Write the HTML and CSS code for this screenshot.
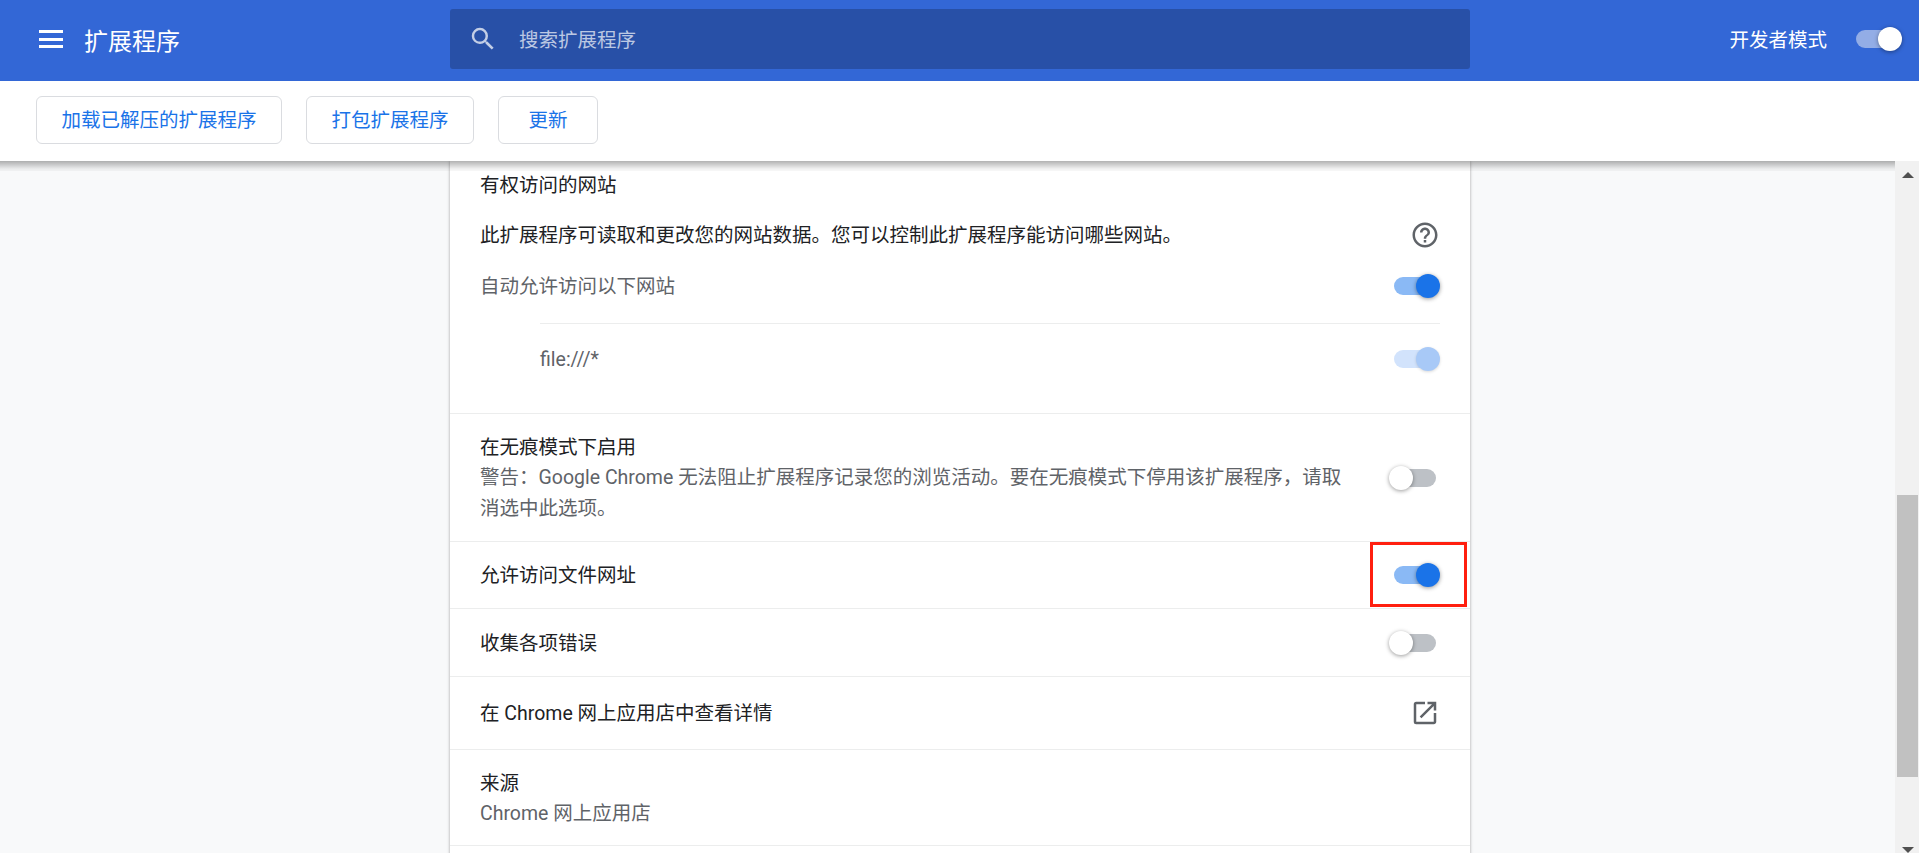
FILE: index.html
```html
<!DOCTYPE html>
<html lang="zh-CN">
<head>
    <meta charset="UTF-8">
    <meta name="viewport" content="width=device-width, initial-scale=1.0">
    <title>扩展程序</title>
    <link rel="stylesheet" href="styles.css">
</head>
<body>
    <header class="topbar">
        <div class="menu-icon"><span></span><span></span><span></span></div>
        <div class="page-title">扩展程序</div>
        <div class="search-box">
            <svg class="search-icon" viewBox="0 0 24 24"><path d="M15.5 14h-.79l-.28-.27A6.47 6.47 0 0 0 16 9.5 6.5 6.5 0 1 0 9.5 16c1.61 0 3.09-.59 4.23-1.57l.27.28v.79l5 4.99L20.49 19l-4.99-5zm-6 0C7.01 14 5 11.99 5 9.5S7.01 5 9.5 5 14 7.01 14 9.5 11.99 14 9.5 14z"/></svg>
            <span class="search-text">搜索扩展程序</span>
        </div>
        <div class="dev-mode">
            <span class="dev-label">开发者模式</span>
            <div class="toggle toggle-dev"><div class="knob"></div></div>
        </div>
    </header>

    <div class="toolbar">
        <button class="tool-btn">加载已解压的扩展程序</button>
        <button class="tool-btn">打包扩展程序</button>
        <button class="tool-btn">更新</button>
    </div>

    <main class="main">
        <div class="content">
            <div class="toolbar-shadow"></div>
            <div class="card">
                <section class="section section-access">
                    <div class="row-title">有权访问的网站</div>
                    <div class="row-desc">
                        <span>此扩展程序可读取和更改您的网站数据。您可以控制此扩展程序能访问哪些网站。</span>
                        <svg class="icon" viewBox="0 0 24 24"><path d="M11 18h2v-2h-2v2zm1-16C6.48 2 2 6.48 2 12s4.48 10 10 10 10-4.48 10-10S17.52 2 12 2zm0 18c-4.41 0-8-3.59-8-8s3.59-8 8-8 8 3.59 8 8-3.59 8-8 8zm0-14c-2.21 0-4 1.79-4 4h2c0-1.1.9-2 2-2s2 .9 2 2c0 2-3 1.75-3 5h2c0-2.25 3-2.5 3-5 0-2.21-1.79-4-4-4z"/></svg>
                    </div>
                    <div class="row-auto">
                        <span class="muted">自动允许访问以下网站</span>
                        <div class="toggle toggle-on"><div class="knob"></div></div>
                    </div>
                    <div class="site-row">
                        <span class="muted">file:///*</span>
                        <div class="toggle toggle-on toggle-disabled"><div class="knob"></div></div>
                    </div>
                </section>

                <section class="section section-incognito">
                    <div class="incognito-text">
                        <div class="line">在无痕模式下启用</div>
                        <div class="line muted">警告：Google Chrome 无法阻止扩展程序记录您的浏览活动。要在无痕模式下停用该扩展程序，请取消选中此选项。</div>
                    </div>
                    <div class="toggle toggle-off"><div class="knob"></div></div>
                </section>

                <section class="section row row-file">
                    <span>允许访问文件网址</span>
                    <div class="toggle toggle-on"><div class="knob"></div></div>
                    <div class="red-mark"></div>
                </section>

                <section class="section row row-errors">
                    <span>收集各项错误</span>
                    <div class="toggle toggle-off"><div class="knob"></div></div>
                </section>

                <section class="section row row-store">
                    <span>在 Chrome 网上应用店中查看详情</span>
                    <svg class="icon" viewBox="0 0 24 24"><path d="M19 19H5V5h7V3H5a2 2 0 0 0-2 2v14a2 2 0 0 0 2 2h14c1.1 0 2-.9 2-2v-7h-2v7zM14 3v2h3.59l-9.83 9.83 1.41 1.41L19 6.41V10h2V3h-7z"/></svg>
                </section>

                <section class="section section-source">
                    <div class="line">来源</div>
                    <div class="line muted source-name">Chrome 网上应用店</div>
                </section>
            </div>
        </div>

        <div class="scrollbar">
            <div class="arrow-up"></div>
            <div class="thumb"></div>
            <div class="arrow-down"></div>
        </div>
    </main>
</body>
</html>
```

FILE: styles.css
```css
:root {
    --header-blue: #3367d6;
    --link-blue: #1a73e8;
    --text: #202124;
    --muted: #5f6368;
    --line: #eceded;
}

* {
    margin: 0;
    padding: 0;
    box-sizing: border-box;
}

body {
    height: 100vh;
    display: flex;
    flex-direction: column;
    overflow: hidden;
    background: #f8f9fa;
    color: var(--text);
    font-family: Roboto, "Noto Sans CJK SC", sans-serif;
    font-size: 19.5px;
}

.topbar {
    height: 81px;
    flex-shrink: 0;
    display: flex;
    align-items: center;
    padding: 0 17px 3px 39px;
    background: var(--header-blue);
    color: #fff;
}

.menu-icon {
    width: 24px;
    height: 18px;
    margin-right: 21px;
    display: flex;
    flex-direction: column;
    justify-content: space-between;
}

.menu-icon span {
    height: 3px;
    background: #fff;
}

.page-title {
    width: 366px;
    font-size: 24px;
}

.search-box {
    width: 1020px;
    height: 60px;
    display: flex;
    align-items: center;
    padding-left: 18px;
    background: #2850a7;
    border-radius: 3px;
}

.search-icon {
    width: 30px;
    height: 30px;
    margin-right: 21px;
    fill: rgba(255, 255, 255, 0.72);
}

.search-text {
    padding-bottom: 2px;
    color: rgba(255, 255, 255, 0.7);
}

.dev-mode {
    margin-left: auto;
    display: flex;
    align-items: center;
    gap: 29px;
}

.dev-label {
    padding-bottom: 2px;
}

.toggle {
    position: relative;
    width: 45px;
    height: 18px;
    flex-shrink: 0;
    border-radius: 9px;
}

.knob {
    position: absolute;
    top: -3px;
    width: 24px;
    height: 24px;
    border-radius: 50%;
    box-shadow: 0 1px 4px rgba(0, 0, 0, 0.4);
}

.toggle-dev {
    margin-right: 1px;
    background: #93ade6;
}

.toggle-dev .knob {
    right: -1px;
    background: #fff;
}

.toggle-on {
    margin-right: 1px;
    background: #8ab9f5;
}

.toggle-on .knob {
    right: -1px;
    background: var(--link-blue);
}

.toggle-disabled {
    background: #d2e3fc;
}

.toggle-disabled .knob {
    background: #a8c9f7;
    box-shadow: 0 1px 3px rgba(0, 0, 0, 0.15);
}

.toggle-off {
    margin-right: 4px;
    background: #bdc1c6;
}

.toggle-off .knob {
    left: -2px;
    background: #fff;
}

.toolbar {
    height: 80px;
    flex-shrink: 0;
    display: flex;
    align-items: flex-start;
    gap: 24px;
    padding: 15px 0 0 36px;
    background: #fff;
}

.tool-btn {
    height: 48px;
    min-width: 100px;
    padding: 0 24.5px 3px;
    background: #fff;
    border: 1px solid #dadce0;
    border-radius: 6px;
    color: var(--link-blue);
    font-family: inherit;
    font-size: 19.5px;
}

.main {
    flex: 1;
    min-height: 0;
    display: flex;
}

.content {
    position: relative;
    flex: 1;
    overflow: hidden;
    padding-left: 450px;
}

.toolbar-shadow {
    position: absolute;
    top: 0;
    left: 0;
    right: 0;
    height: 10px;
    z-index: 2;
    background: linear-gradient(to bottom, rgba(0, 0, 0, 0.3), rgba(0, 0, 0, 0.05) 80%, rgba(0, 0, 0, 0.03));
}

.card {
    width: 1020px;
    min-height: 100%;
    padding-bottom: 40px;
    background: #fff;
    box-shadow: 0 0 3px rgba(0, 0, 0, 0.35);
}

.section {
    border-bottom: 1px solid var(--line);
    padding: 0 30px;
}

.muted {
    color: var(--muted);
}

.icon {
    width: 30px;
    height: 30px;
    flex-shrink: 0;
    fill: var(--muted);
}

.section-access {
    height: 253px;
}

.row-title {
    height: 48px;
    line-height: 50px;
}

.row-desc,
.row-auto,
.site-row,
.row {
    display: flex;
    align-items: center;
    justify-content: space-between;
}

.row-desc > span,
.row-auto > span,
.row > span {
    padding-bottom: 3px;
}

.row-desc {
    height: 52px;
}

.row-auto {
    height: 50px;
}

.site-row {
    height: 71px;
    margin: 12px 0 0 60px;
    border-top: 1px solid var(--line);
}

.section-incognito {
    height: 128px;
    display: flex;
    align-items: center;
    justify-content: space-between;
}

.incognito-text {
    width: 865px;
    padding-top: 2px;
}

.line {
    line-height: 30.5px;
}

.row {
    position: relative;
}

.row-file {
    height: 67px;
}

.row-errors {
    height: 68px;
}

.row-store {
    height: 73px;
}

.section-source {
    height: 96px;
    padding-top: 19px;
}

.source-name {
    margin-top: -1px;
}

.red-mark {
    position: absolute;
    top: 0;
    right: 3px;
    width: 97px;
    height: 65px;
    border: 3px solid #ff1f0f;
}

.scrollbar {
    width: 24px;
    flex-shrink: 0;
    display: flex;
    flex-direction: column;
    align-items: center;
    background: #f1f1f1;
    padding-left: 1px;
}

.arrow-up,
.arrow-down {
    width: 0;
    height: 0;
    border-left: 6px solid transparent;
    border-right: 6px solid transparent;
}

.arrow-up {
    margin-top: 11px;
    border-bottom: 6px solid #505050;
}

.thumb {
    width: 21px;
    height: 282px;
    margin-top: 317px;
    background: #c1c1c1;
}

.arrow-down {
    margin-top: auto;
    border-top: 6px solid #505050;
}
```
